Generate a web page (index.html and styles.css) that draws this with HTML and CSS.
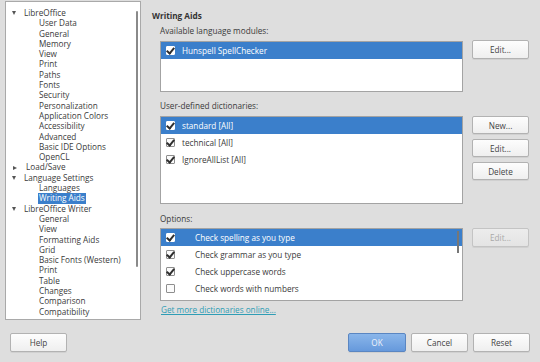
FILE: index.html
```html
<!DOCTYPE html>
<html>
<head>
<meta charset="utf-8">
<link rel="stylesheet" href="styles.css">
</head>
<body>
<div class="dialog">
  <div class="main">
    <div class="tree">
      <div class="tree-scroll"></div>
      <div class="node top"><span class="tri down"></span>LibreOffice</div>
      <div class="node child">User Data</div>
      <div class="node child">General</div>
      <div class="node child">Memory</div>
      <div class="node child">View</div>
      <div class="node child">Print</div>
      <div class="node child">Paths</div>
      <div class="node child">Fonts</div>
      <div class="node child">Security</div>
      <div class="node child">Personalization</div>
      <div class="node child">Application Colors</div>
      <div class="node child">Accessibility</div>
      <div class="node child">Advanced</div>
      <div class="node child">Basic IDE Options</div>
      <div class="node child">OpenCL</div>
      <div class="node top"><span class="tri right"></span>Load/Save</div>
      <div class="node top"><span class="tri down"></span>Language Settings</div>
      <div class="node child">Languages</div>
      <div class="node child"><span class="sel">Writing Aids</span></div>
      <div class="node top"><span class="tri down"></span>LibreOffice Writer</div>
      <div class="node child">General</div>
      <div class="node child">View</div>
      <div class="node child">Formatting Aids</div>
      <div class="node child">Grid</div>
      <div class="node child">Basic Fonts (Western)</div>
      <div class="node child">Print</div>
      <div class="node child">Table</div>
      <div class="node child">Changes</div>
      <div class="node child">Comparison</div>
      <div class="node child">Compatibility</div>
    </div>

    <div class="page">
      <div class="heading">Writing Aids</div>

      <div class="label l1">Available language modules:</div>
      <div class="row r1">
        <div class="list list1">
          <div class="item selected"><span class="cb on"></span><span class="txt">Hunspell SpellChecker</span></div>
        </div>
        <div class="btns">
          <button class="btn">Edit...</button>
        </div>
      </div>

      <div class="label l2">User-defined dictionaries:</div>
      <div class="row r2">
        <div class="list list2">
          <div class="item selected"><span class="cb on"></span><span class="txt">standard [All]</span></div>
          <div class="item"><span class="cb on"></span><span class="txt">technical [All]</span></div>
          <div class="item"><span class="cb on"></span><span class="txt">IgnoreAllList [All]</span></div>
        </div>
        <div class="btns">
          <button class="btn">New...</button>
          <button class="btn">Edit...</button>
          <button class="btn">Delete</button>
        </div>
      </div>

      <div class="label l3">Options:</div>
      <div class="row r3">
        <div class="list list3">
          <div class="list-scroll"></div>
          <div class="item selected"><span class="cb on"></span><span class="txt wide">Check spelling as you type</span></div>
          <div class="item"><span class="cb on"></span><span class="txt wide">Check grammar as you type</span></div>
          <div class="item"><span class="cb on"></span><span class="txt wide">Check uppercase words</span></div>
          <div class="item"><span class="cb"></span><span class="txt wide">Check words with numbers</span></div>
        </div>
        <div class="btns">
          <button class="btn disabled">Edit...</button>
        </div>
      </div>

      <a class="link">Get more dictionaries online...</a>
    </div>
  </div>

  <div class="footer">
    <button class="btn fbtn">Help</button>
    <div class="spacer"></div>
    <button class="btn fbtn ok">OK</button>
    <button class="btn fbtn">Cancel</button>
    <button class="btn fbtn">Reset</button>
  </div>
</div>
</body>
</html>
```

FILE: styles.css
```css
html, body {
  margin: 0;
  padding: 0;
}
body {
  width: 540px;
  height: 362px;
  background: #dedede;
  font-family: "Open Sans", "Noto Sans", sans-serif;
  font-size: 8.2px;
  color: #3a3a3a;
  overflow: hidden;
}
.dialog {
  display: flex;
  flex-direction: column;
  height: 362px;
}
.main {
  display: flex;
  height: 320px;
  padding-left: 5px;
}
.tree {
  position: relative;
  width: 136px;
  height: 319px;
  margin-top: 1px;
  background: #fff;
  border: 1px solid #a9a9a9;
  box-sizing: border-box;
  padding-top: 6px;
  overflow: hidden;
}
.tree-scroll {
  position: absolute;
  right: 2px;
  top: 9px;
  width: 2px;
  height: 256px;
  background: #8a8a8a;
  border-radius: 1px;
}
.node {
  height: 10.3px;
  line-height: 10.3px;
  white-space: nowrap;
  display: flex;
  align-items: center;
}
.node.top {
  padding-left: 5px;
}
.node.child {
  padding-left: 33px;
}
.tri {
  width: 0;
  height: 0;
  margin-right: 8px;
}
.tri.down {
  border-left: 2.5px solid transparent;
  border-right: 2.5px solid transparent;
  border-top: 4px solid #555;
  margin-left: 1px;
}
.tri.right {
  border-top: 2.5px solid transparent;
  border-bottom: 2.5px solid transparent;
  border-left: 4px solid #555;
  margin-right: 9px;
  margin-left: 2px;
}
.sel {
  background: #3b7fcb;
  color: #fff;
  padding: 0 1px;
  margin-left: -1px;
  line-height: 10.3px;
}
.page {
  flex: 1;
  padding-left: 11px;
  padding-top: 10px;
}
.heading {
  font-weight: bold;
  line-height: 12px;
  height: 12px;
  color: #333;
}
.label {
  line-height: 12px;
  height: 12px;
  padding-left: 8px;
}
.l1 { margin-top: 3px; }
.l2 { margin-top: 8px; }
.l3 { margin-top: 9px; }
.row {
  display: flex;
  padding-left: 8px;
  gap: 9px;
}
.r1 { margin-top: 4px; }
.r2 { margin-top: 4px; }
.r3 { margin-top: 3px; }
.list {
  position: relative;
  width: 303px;
  background: #fff;
  border: 1px solid #a3a3a3;
  box-sizing: border-box;
  overflow: hidden;
}
.list1 { height: 51px; }
.list2 { height: 88px; }
.list3 { height: 73px; }
.list-scroll {
  position: absolute;
  right: 3px;
  top: 2px;
  width: 2px;
  height: 22px;
  background: #777;
}
.item {
  height: 17px;
  display: flex;
  align-items: center;
  padding-left: 5px;
  white-space: nowrap;
}
.item.selected {
  background: #3b7fcb;
  color: #fff;
}
.cb {
  position: relative;
  width: 9px;
  height: 9px;
  box-sizing: border-box;
  border: 1px solid #8e8e8e;
  background: #fbfbfb;
  border-radius: 1px;
  flex: none;
}
.item.selected .cb {
  border-color: #fff;
  background: #fff;
}
.cb.on::after {
  content: "";
  position: absolute;
  left: 1px;
  top: -1px;
  width: 3px;
  height: 6px;
  border-right: 2px solid #2f2f2f;
  border-bottom: 2px solid #2f2f2f;
  transform: rotate(40deg);
}
.txt {
  margin-left: 7px;
}
.txt.wide {
  margin-left: 20px;
}
.btns {
  display: flex;
  flex-direction: column;
  gap: 5px;
}
.btn {
  width: 57px;
  height: 19px;
  box-sizing: border-box;
  border: 1px solid #b2b2b2;
  border-radius: 2px;
  background: linear-gradient(#fdfdfd, #efefef);
  font-family: "Open Sans", "Noto Sans", sans-serif;
  font-size: 8.2px;
  color: #444;
  padding: 0;
  box-shadow: 0 1px 0 rgba(0,0,0,0.06);
}
.r1 .btns { margin-top: -1px; }
.r2 .btn { height: 18px; }
.btn.disabled {
  color: #a9a9a9;
  background: linear-gradient(#ececec, #e4e4e4);
  border-color: #c4c4c4;
  height: 19px;
  margin-top: 0;
}
.link {
  display: block;
  margin-top: 3px;
  padding-left: 9px;
  line-height: 12px;
  color: #2f9db5;
  text-decoration: underline;
}
.footer {
  display: flex;
  padding: 13px 10px 0 10px;
  gap: 5px;
}
.spacer { flex: 1; }
.fbtn {
  width: 57px;
  height: 19px;
}
.btn.ok {
  width: 58px;
  background: linear-gradient(#8ab6ea, #6699dc);
  border-color: #5a86c2;
  color: #eef3fb;
}
```
